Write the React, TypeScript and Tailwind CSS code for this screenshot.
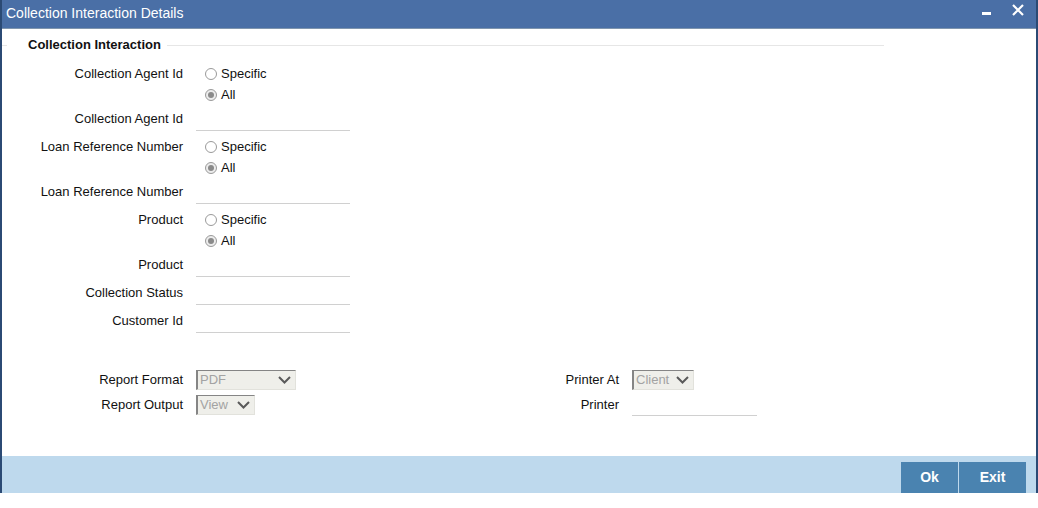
import React from 'react';

const font = "font-['Liberation_Sans',Arial,sans-serif]";

function Radio({ checked, label }: { checked?: boolean; label: string }) {
  return (
    <div className="flex items-center ml-[22px]">
      <span
        className={`w-[12px] h-[12px] rounded-full border border-[#9a9a9a] flex items-center justify-center ${
          checked ? 'bg-[#ececec]' : 'bg-white'
        }`}
      >
        {checked && <span className="w-[6px] h-[6px] rounded-full bg-[#8a8a8a]" />}
      </span>
      <span className="ml-[4px]">{label}</span>
    </div>
  );
}

function RadioGroup({ label, first }: { label: string; first?: boolean }) {
  return (
    <div className={first ? '' : 'mt-[3px]'}>
      <div className="flex h-[21px] items-center">
        <div className="w-[181px] text-right shrink-0">{label}</div>
        <Radio label="Specific" />
      </div>
      <div className="flex h-[21px] items-center">
        <div className="w-[181px] shrink-0" />
        <Radio checked label="All" />
      </div>
    </div>
  );
}

function TextRow({ label, width = 'w-[154px]' }: { label: string; width?: string }) {
  return (
    <div className="flex h-[28px] items-center">
      <div className="w-[181px] text-right shrink-0">{label}</div>
      <div className={`ml-[13px] h-[23px] border-b border-[#d0d0d0] ${width}`} />
    </div>
  );
}

function FakeSelect({ value, width }: { value: string; width: string }) {
  return (
    <div
      className={`ml-[13px] h-[20px] ${width} flex items-center justify-between bg-[#efefea] border-t border-l-2 border-[#858585] border-b border-r border-b-[#e2e2dc] border-r-[#e2e2dc] pl-[2px] pr-[4px]`}
    >
      <span className="text-[#a3a3a3] leading-none">{value}</span>
      <svg width="13" height="8" viewBox="0 0 13 8">
        <polyline points="1,1 6.5,6.5 12,1" fill="none" stroke="#5a5a5a" strokeWidth="2" />
      </svg>
    </div>
  );
}

export default function App() {
  return (
    <div className={`w-[1038px] h-[508px] bg-white text-[13px] text-[#111] ${font}`}>
      <div className="h-[493px] flex flex-col border-x-2 border-[#2b4a74]">
        {/* Title bar */}
        <div className="h-[29px] shrink-0 bg-[#4a6fa6] border-b border-[#7f95ae] flex items-center justify-between">
          <span className="pl-[4px] text-white text-[14px] pb-[1px]">Collection Interaction Details</span>
          <div className="flex items-center pr-[12px]">
            <svg width="9" height="3" viewBox="0 0 9 3" className="mt-[-2px]">
              <rect width="9" height="3" fill="#fff" />
            </svg>
            <svg width="12" height="12" viewBox="0 0 12 12" className="ml-[21px] mb-[9px]">
              <path d="M1 1 L11 11 M11 1 L1 11" stroke="#fff" strokeWidth="2.2" />
            </svg>
          </div>
        </div>

        {/* Body */}
        <div className="flex-1">
          <div className="mt-[7px] h-[18px] flex items-center w-[882px]">
            <div className="w-[5px] border-t border-[#e6e6e6]" />
            <span className="ml-[21px] font-bold">Collection Interaction</span>
            <div className="flex-1 ml-[6px] border-t border-[#e6e6e6]" />
          </div>

          <div className="mt-[9px]">
            <RadioGroup first label="Collection Agent Id" />
            <TextRow label="Collection Agent Id" />
            <RadioGroup label="Loan Reference Number" />
            <TextRow label="Loan Reference Number" />
            <RadioGroup label="Product" />
            <TextRow label="Product" />
            <TextRow label="Collection Status" />
            <TextRow label="Customer Id" />
          </div>

          <div className="mt-[32px] flex">
            <div className="w-[436px] shrink-0">
              <div className="flex h-[25px] items-center">
                <div className="w-[181px] text-right shrink-0">Report Format</div>
                <FakeSelect value="PDF" width="w-[100px]" />
              </div>
              <div className="flex h-[25px] items-center">
                <div className="w-[181px] text-right shrink-0">Report Output</div>
                <FakeSelect value="View" width="w-[59px]" />
              </div>
            </div>
            <div>
              <div className="flex h-[25px] items-center">
                <div className="w-[181px] text-right shrink-0">Printer At</div>
                <FakeSelect value="Client" width="w-[62px]" />
              </div>
              <div className="flex h-[25px] items-center">
                <div className="w-[181px] text-right shrink-0">Printer</div>
                <div className="ml-[13px] h-[23px] w-[125px] border-b border-[#d0d0d0]" />
              </div>
            </div>
          </div>
        </div>

        {/* Footer */}
        <div className="h-[37px] shrink-0 bg-[#bed9ed] flex items-end justify-end pr-[10px]">
          <button className="h-[31px] w-[57px] bg-[#4a83b0] text-white font-bold text-[14px]">Ok</button>
          <button className="h-[31px] w-[67px] ml-[1px] bg-[#4a83b0] text-white font-bold text-[14px]">Exit</button>
        </div>
      </div>
    </div>
  );
}
